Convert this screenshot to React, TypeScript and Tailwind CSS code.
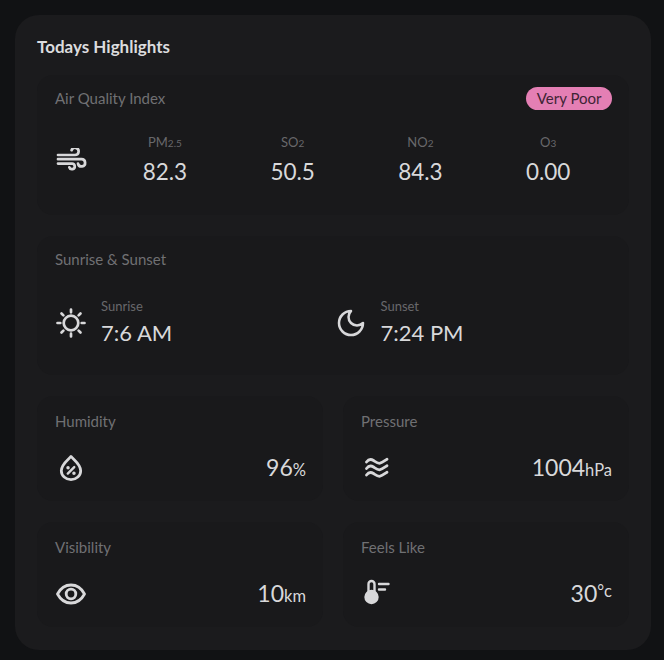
const font = "font-['Lato','Noto_Sans',sans-serif]";

function WindIcon() {
  return (
    <svg width="32" height="24" viewBox="0 0 32 24" fill="none" stroke="currentColor" strokeWidth="2.7" strokeLinecap="round" strokeLinejoin="round">
      <path d="M3 7H20a3.600 3.600 0 1 0-3.400-4.800" />
      <path d="M3 11.200H26.500a3.600 3.600 0 1 1-3.500 4.400" />
      <path d="M3 15.600H17a2.800 2.800 0 1 1-2.700 3.700" />
    </svg>
  );
}

function SunIcon() {
  return (
    <svg width="32" height="32" viewBox="0 0 32 32" fill="none" stroke="currentColor" strokeWidth="2.7" strokeLinecap="round">
      <circle cx="16" cy="16" r="7.300" />
      <path d="M16 2.500v2.800M16 26.700v2.800M2.500 16h2.800M26.700 16h2.800M6.500 6.500l1.900 1.900M23.600 23.600l1.900 1.900M6.500 25.500l1.900-1.900M23.600 8.400l1.900-1.900" />
    </svg>
  );
}

function MoonIcon() {
  return (
    <svg width="32" height="32" viewBox="0 0 24 24" fill="none" stroke="currentColor" strokeWidth="1.900" strokeLinejoin="round">
      <path d="M12 3a6 6 0 0 0 9 9 9 9 0 1 1-9-9Z" />
    </svg>
  );
}

function DropPercentIcon() {
  return (
    <svg width="24" height="28" viewBox="0 0 26 30" fill="none" stroke="currentColor" strokeWidth="3" strokeLinecap="round" strokeLinejoin="round">
      <path d="M13 2.500c3 3.500 10.500 8.500 10.500 15.500a10.500 9.500 0 0 1-21 0C2.500 11 10 6 13 2.500Z" />
      <path d="M9.500 21l7-7" strokeWidth="2.600" />
      <circle cx="9.800" cy="14.800" r="0.900" fill="currentColor" strokeWidth="2" />
      <circle cx="16.200" cy="20.800" r="0.900" fill="currentColor" strokeWidth="2" />
    </svg>
  );
}

function WavesIcon() {
  return (
    <svg width="32" height="24" viewBox="0 0 32 24" fill="none" stroke="currentColor" strokeWidth="2.800" strokeLinecap="round" strokeLinejoin="round">
      <path d="M5.500 6c2.200-3 4.500-3.200 7-1.500c2.600 1.700 4.500 3.200 6.500 2.700c2.700-.5 4.500-2.500 7-4" />
      <path d="M5.500 12.500c2.200-3 4.500-3.200 7-1.500c2.600 1.700 4.500 3.200 6.500 2.700c2.700-.5 4.500-2.500 7-4" />
      <path d="M5.500 19c2.200-3 4.500-3.200 7-1.500c2.600 1.700 4.500 3.200 6.500 2.700c2.700-.5 4.500-2.500 7-4" />
    </svg>
  );
}

function EyeIcon() {
  return (
    <svg width="32" height="24" viewBox="0 0 32 24" fill="none" stroke="currentColor" strokeWidth="2.800" strokeLinejoin="round">
      <path d="M2.500 12C5.800 5.800 10.500 3 16 3s10.200 2.800 13.500 9c-3.300 6.200-8 9-13.500 9S5.800 18.200 2.500 12Z" />
      <circle cx="16" cy="12" r="4.800" />
    </svg>
  );
}

function ThermoIcon() {
  return (
    <svg width="32" height="26" viewBox="0 0 32 26" fill="none" stroke="currentColor" strokeWidth="2.400" strokeLinecap="round">
      <path d="M7.500 16V5a3 3 0 0 1 6 0V16" />
      <circle cx="10.500" cy="18" r="7.200" fill="currentColor" stroke="none" />
      <path d="M18 5h9.500M18 10.500h6" />
    </svg>
  );
}

function IconBox({ children }: { children: React.ReactNode }) {
  return <span className="flex w-[32px] shrink-0 justify-center text-[#d8d8da]">{children}</span>;
}

function Pollutant({ name, sub, value }: { name: string; sub: string; value: string }) {
  return (
    <div className="flex flex-col items-center gap-[5px]">
      <p className="text-[13px] leading-[18px] text-[#68686b]">
        {name}
        <span className="text-[10px]">{sub}</span>
      </p>
      <p className="text-[22.500px] leading-[30px] text-[#d8d8da]">{value}</p>
    </div>
  );
}

function SunTime({ label, time, icon }: { label: string; time: string; icon: React.ReactNode }) {
  return (
    <div className="flex items-center gap-[14px]">
      <IconBox>{icon}</IconBox>
      <div className="flex flex-col gap-[3px]">
        <p className="text-[13px] leading-[18px] text-[#68686b]">{label}</p>
        <p className="text-[22px] leading-[30px] text-[#d8d8da]">{time}</p>
      </div>
    </div>
  );
}

function Stat({ label, icon, value, unit, raised }: { label: string; icon: React.ReactNode; value: string; unit: string; raised?: boolean }) {
  return (
    <div className="h-[105px] rounded-2xl bg-[#19191b] pl-[18px] pr-[17px] pt-[15px]">
      <p className="text-[15px] leading-[20px] text-[#707073]">{label}</p>
      <div className="mt-[21px] flex items-center justify-between">
        <span className="mb-[2px]">
          <IconBox>{icon}</IconBox>
        </span>
        <p className="text-[23px] leading-[30px] text-[#d8d8da]">
          {value}
          <span className={raised ? "align-[5px] text-[16.500px] leading-none" : "text-[16.500px]"}>{unit}</span>
        </p>
      </div>
    </div>
  );
}

export default function App() {
  return (
    <div className={`h-[660px] w-[664px] bg-[#111214] p-[15px] ${font}`}>
      <div className="h-[635px] w-[636px] rounded-[24px] bg-[#1b1b1d] px-[22px] pt-[22px]">
        <h2 className="text-[17px] font-bold leading-[20px] text-[#dcdcde]">Todays Highlights</h2>
        <div className="mt-[18px] flex flex-col gap-[21px]">
          <section className="h-[140px] rounded-2xl bg-[#19191b] pl-[18px] pr-[17px] pt-[12px]">
            <div className="flex items-center justify-between">
              <p className="mb-[2px] text-[15px] leading-[20px] text-[#707073]">Air Quality Index</p>
              <span className="rounded-full bg-[#e47fb4] px-[10.500px] text-[15px] leading-[23px] text-[#3f2435]">Very Poor</span>
            </div>
            <div className="mt-[23px] flex items-center">
              <IconBox><WindIcon /></IconBox>
              <div className="ml-[14px] grid flex-1 grid-cols-4">
                <Pollutant name="PM" sub="2.5" value="82.3" />
                <Pollutant name="SO" sub="2" value="50.5" />
                <Pollutant name="NO" sub="2" value="84.3" />
                <Pollutant name="O" sub="3" value="0.00" />
              </div>
            </div>
          </section>
          <section className="h-[139px] rounded-2xl bg-[#19191b] pl-[18px] pr-[17px] pt-[13px]">
            <p className="text-[15px] leading-[20px] text-[#707073]">Sunrise &amp; Sunset</p>
            <div className="mt-[28px] grid grid-cols-2">
              <SunTime label="Sunrise" time="7:6 AM" icon={<SunIcon />} />
              <div className="pl-px">
                <SunTime label="Sunset" time="7:24 PM" icon={<MoonIcon />} />
              </div>
            </div>
          </section>
          <div className="grid grid-cols-2 gap-x-5 gap-y-[21px]">
            <Stat label="Humidity" icon={<DropPercentIcon />} value="96" unit="%" />
            <Stat label="Pressure" icon={<WavesIcon />} value="1004" unit="hPa" />
            <Stat label="Visibility" icon={<EyeIcon />} value="10" unit="km" />
            <Stat label="Feels Like" icon={<ThermoIcon />} value="30" unit="°c" raised />
          </div>
        </div>
      </div>
    </div>
  );
}
